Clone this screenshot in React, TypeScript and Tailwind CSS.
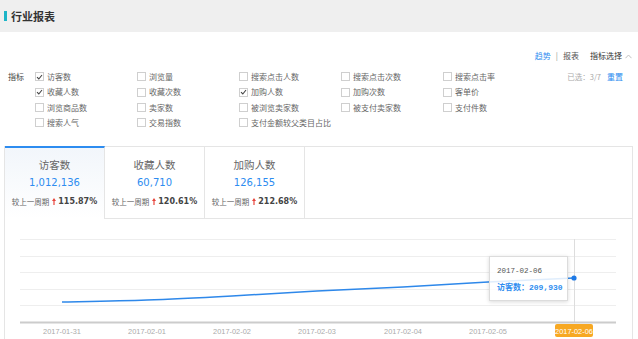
import React from "react";

type Item = [string, boolean];

const metricRows: Item[][] = [
  [["访客数", true], ["浏览量", false], ["搜索点击人数", false], ["搜索点击次数", false], ["搜索点击率", false]],
  [["收藏人数", true], ["收藏次数", false], ["加购人数", true], ["加购次数", false], ["客单价", false]],
  [["浏览商品数", false], ["卖家数", false], ["被浏览卖家数", false], ["被支付卖家数", false], ["支付件数", false]],
  [["搜索人气", false], ["交易指数", false], ["支付金额较父类目占比", false]],
];

const tabs = [
  { title: "访客数", value: "1,012,136", rate: "115.87%", active: true },
  { title: "收藏人数", value: "60,710", rate: "120.61%", active: false },
  { title: "加购人数", value: "126,155", rate: "212.68%", active: false },
];

const dates = ["2017-01-31", "2017-02-01", "2017-02-02", "2017-02-03", "2017-02-04", "2017-02-05", "2017-02-06"];
const points: [number, number][] = [
  [57, 83], [142, 81], [227, 77], [312, 72], [398, 68], [483, 63], [569, 59],
];

function smoothPath(pts: [number, number][]) {
  let d = `M${pts[0][0]},${pts[0][1]}`;
  for (let i = 0; i < pts.length - 1; i++) {
    const p0 = pts[i - 1] || pts[i];
    const p1 = pts[i];
    const p2 = pts[i + 1];
    const p3 = pts[i + 2] || p2;
    const c1x = p1[0] + (p2[0] - p0[0]) / 6;
    const c1y = p1[1] + (p2[1] - p0[1]) / 6;
    const c2x = p2[0] - (p3[0] - p1[0]) / 6;
    const c2y = p2[1] - (p3[1] - p1[1]) / 6;
    d += ` C${c1x},${c1y} ${c2x},${c2y} ${p2[0]},${p2[1]}`;
  }
  return d;
}

function Checkbox({ checked }: { checked: boolean }) {
  return (
    <span className="w-[9px] h-[9px] border border-[#cfcfcf] bg-white flex items-center justify-center shrink-0">
      {checked && (
        <svg width="7" height="6" viewBox="0 0 7 6">
          <path d="M1 3.2 L2.8 5 L6 1" fill="none" stroke="#444" strokeWidth="1.1" />
        </svg>
      )}
    </span>
  );
}

function UpArrow() {
  return (
    <svg width="4" height="7" viewBox="0 0 4 7" className="mr-[2px]">
      <path d="M2 0 L4 3 L2.6 3 L2.6 7 L1.4 7 L1.4 3 L0 3 Z" fill="#e8453c" />
    </svg>
  );
}

export default function App() {
  return (
    <div className="w-[638px] h-[339px] overflow-hidden bg-white font-['Noto_Sans_CJK_SC',sans-serif] text-[#333]">
      {/* header */}
      <div className="h-[32px] bg-[#efefef] flex items-center pl-[4px]">
        <span className="w-[3px] h-[10px] bg-[#1db5c8]" />
        <span className="ml-[4px] text-[11px] font-semibold text-[#333] leading-none">行业报表</span>
      </div>

      {/* view switch */}
      <div className="mt-[18px] h-[12px] flex justify-end items-center pr-[6px] text-[8px] leading-[12px]">
        <span className="text-[#2d8cf0]">趋势</span>
        <span className="ml-[5px] text-[#999]">|</span>
        <span className="ml-[5px] text-[#555]">报表</span>
        <span className="ml-[11px] text-[#333]">指标选择</span>
        <svg width="7" height="5" viewBox="0 0 7 5" className="ml-[3px]">
          <path d="M0.5 4.2 L3.5 1 L6.5 4.2" fill="none" stroke="#bbb" strokeWidth="0.9" />
        </svg>
      </div>

      {/* metric checkboxes */}
      <div className="mt-[7px] flex pl-[8px] text-[8px] leading-[15.4px]">
        <span className="w-[27px] text-[#444]">指标</span>
        <div className="flex flex-col">
          {metricRows.map((row, r) => (
            <div key={r} className="grid grid-cols-[102px_102px_102px_102px_102px] h-[15.4px]">
              {row.map(([label, checked]) => (
                <div key={label} className="flex items-center gap-[3px]">
                  <Checkbox checked={checked} />
                  <span className="text-[#666] whitespace-nowrap">{label}</span>
                </div>
              ))}
            </div>
          ))}
        </div>
        <div className="ml-auto pr-[15px] text-[7.5px] text-[#aaa] whitespace-nowrap">
          已选：3/7<span className="ml-[6px] text-[8px] text-[#2d8cf0]">重置</span>
        </div>
      </div>

      {/* card */}
      <div className="mt-[15px] ml-[4px] w-[629px] border-t border-x border-[#e5e5e5]">
        <div className="flex">
          {tabs.map((t) =>
            <div
              key={t.title}
              className={
                t.active
                  ? "w-[100px] h-[73px] -mt-px border-t-2 border-t-[#2d8cf0] border-r border-r-[#e5e5e5] bg-linear-to-b from-[#f2f6fb] to-white flex flex-col items-center pt-[10px]"
                  : "w-[100px] h-[72px] border-r border-b border-[#e5e5e5] bg-white flex flex-col items-center pt-[11px]"
              }
            >
              <span className="text-[10.5px] leading-[14px] text-[#666]">{t.title}</span>
              <span className="mt-[3px] text-[10px] leading-[16px] text-[#2d8cf0] font-['DejaVu_Sans',sans-serif]">
                {t.value}
              </span>
              <span className="mt-[5px] flex items-center text-[7.5px] leading-[12px] text-[#666] whitespace-nowrap">
                <span className="mr-[3px]">较上一周期</span>
                <UpArrow />
                <span className="font-['DejaVu_Sans',sans-serif] font-bold text-[8px] text-[#444]">{t.rate}</span>
              </span>
            </div>
          )}
          <div className="flex-1 h-[72px] border-b border-[#e5e5e5]" />
        </div>

        {/* chart */}
        <div className="relative h-[120px]">
          <svg width="627" height="120" viewBox="0 0 627 120" className="block">
            {[20, 37, 53, 70, 86].map((y) => (
              <line key={y} x1="15" x2="611" y1={y + 0.5} y2={y + 0.5} stroke="#eeeeee" strokeWidth="1" />
            ))}
            <line x1="569.5" x2="569.5" y1="20" y2="103" stroke="#dddddd" strokeWidth="1" />
            <line x1="15" x2="611" y1="103.5" y2="103.5" stroke="#cccccc" strokeWidth="2" />
            <path d={smoothPath(points)} fill="none" stroke="#2e88ea" strokeWidth="1.5" />
            <circle cx="569" cy="59" r="2.6" fill="#1f7ae6" />
            <rect x="550" y="105" width="38" height="13" rx="2" fill="#f7a823" />
            {dates.map((d, i) => (
              <text
                key={d}
                x={points[i][0]}
                y="114.5"
                textAnchor="middle"
                fontSize="7.4"
                fontFamily="'Liberation Sans', sans-serif"
                fill={i === dates.length - 1 ? "#ffffff" : "#aaaaaa"}
              >
                {d}
              </text>
            ))}
          </svg>

          {/* tooltip */}
          <div className="absolute left-[484px] top-[37px] w-[79px] h-[45px] bg-white/85 border border-[#dcdcdc] shadow-[0_1px_4px_rgba(0,0,0,0.15)] pl-[7px] pt-[9px]">
            <div className="text-[7.5px] leading-[10px] text-[#555] font-['Liberation_Mono',monospace]">2017-02-06</div>
            <div className="mt-[5px] text-[8px] leading-[11px] text-[#2d8cf0] font-bold whitespace-nowrap">
              访客数：<span className="font-['Liberation_Mono',monospace]">209,930</span>
            </div>
          </div>
        </div>
      </div>
    </div>
  );
}
